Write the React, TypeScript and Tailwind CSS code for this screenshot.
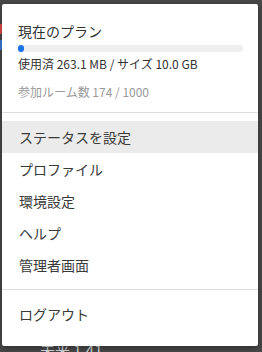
const ITEMS = ['ステータスを設定', 'プロファイル', '環境設定', 'ヘルプ', '管理者画面'];

export default function App() {
  return (
    <div
      className="relative h-[352px] w-[262px] overflow-hidden bg-[#484848]"
      style={{ fontFamily: '"Noto Sans CJK JP", "Liberation Sans", sans-serif' }}
    >
      {/* 背景に見えている部分 */}
      <div className="absolute left-0 top-[24px] h-[10px] w-[2px] bg-[#e04848]" />
      <div className="absolute left-0 top-[40px] h-[10px] w-[2px] bg-[#3a7bd5]" />
      <div className="absolute left-[40px] top-[342px] text-[15px] leading-none text-[#d8d8d8]">未来 1.41</div>

      <div className="relative ml-[2px] mt-[4px] h-[342px] w-[256px] rounded-[2px] bg-white shadow-[0_2px_6px_rgba(0,0,0,0.35)]">
        <div className="px-[16px] pt-[17px] pb-[11px]">
          <div className="text-[14px] leading-[20px] text-[#333]">現在のプラン</div>
          <div className="mt-[4px] h-[7px] w-[225px] rounded-full bg-[#eeeeee]">
            <div className="h-[7px] w-[6px] rounded-full bg-[#1a73e8]" />
          </div>
          <div className="mt-[3px] text-[12px] leading-[18px] text-[#333]">使用済 263.1 MB / サイズ 10.0 GB</div>
          <div className="mt-[10px] text-[12px] leading-[18px] text-[#9a9a9a]">参加ルーム数 174 / 1000</div>
        </div>
        <div className="h-px bg-[#dddddd]" />
        <div className="pt-[8px] pb-[8px]">
          {ITEMS.map((item, i) => (
            <div
              key={item}
              className={`flex h-[32px] items-center px-[17px] text-[14px] text-[#3a3a3a] ${i === 0 ? 'bg-[#ebebeb]' : ''}`}
            >
              {item}
            </div>
          ))}
        </div>
        <div className="h-px bg-[#dddddd]" />
        <div className="pt-[8px]">
          <div className="flex h-[32px] items-center px-[17px] text-[14px] text-[#3a3a3a]">ログアウト</div>
        </div>
      </div>
    </div>
  );
}
